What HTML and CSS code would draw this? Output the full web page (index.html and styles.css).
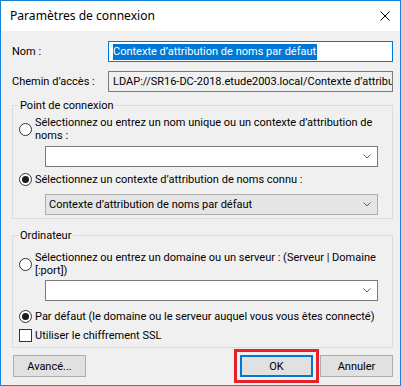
FILE: index.html
```html
<!DOCTYPE html>
<html lang="fr">
<head>
    <meta charset="UTF-8">
    <meta name="viewport" content="width=device-width, initial-scale=1.0">
    <title>Paramètres de connexion</title>
    <link rel="stylesheet" href="styles.css">
</head>
<body>
    <div class="window">
        <div class="titlebar">
            <span class="title">Paramètres de connexion</span>
            <svg class="close" width="10" height="10" viewBox="0 0 10 10">
                <path d="M0.5 0.5L9.5 9.5M9.5 0.5L0.5 9.5" stroke="#000" stroke-width="1" fill="none"/>
            </svg>
        </div>

        <div class="content">
            <div class="field-row">
                <label class="field-label">Nom :</label>
                <div class="textbox focused"><span class="selection">Contexte d’attribution de noms par défaut</span></div>
            </div>
            <div class="field-row row-path">
                <label class="field-label">Chemin d’accès :</label>
                <div class="textbox readonly">LDAP://SR16-DC-2018.etude2003.local/Contexte d’attribution de noms par défaut</div>
            </div>

            <fieldset class="group group-point">
                <legend>Point de connexion</legend>
                <div class="option opt-unique">
                    <span class="radio"></span>
                    <span class="option-text">Sélectionnez ou entrez un nom unique ou un contexte d’attribution de<br>noms :</span>
                </div>
                <div class="combo combo-unique">
                    <span class="combo-value"></span>
                    <svg class="chevron" width="8" height="5" viewBox="0 0 8 5"><path d="M0.5 0.5L4 4L7.5 0.5" stroke="#606060" fill="none"/></svg>
                </div>
                <div class="option opt-known">
                    <span class="radio checked"></span>
                    <span class="option-text">Sélectionnez un contexte d’attribution de noms connu :</span>
                </div>
                <div class="combo list combo-known">
                    <span class="combo-value">Contexte d’attribution de noms par défaut</span>
                    <svg class="chevron" width="8" height="5" viewBox="0 0 8 5"><path d="M0.5 0.5L4 4L7.5 0.5" stroke="#606060" fill="none"/></svg>
                </div>
            </fieldset>

            <fieldset class="group group-computer">
                <legend>Ordinateur</legend>
                <div class="option opt-server">
                    <span class="radio"></span>
                    <span class="option-text">Sélectionnez ou entrez un domaine ou un serveur : (Serveur | Domaine<br>[:port])</span>
                </div>
                <div class="combo combo-server">
                    <span class="combo-value"></span>
                    <svg class="chevron" width="8" height="5" viewBox="0 0 8 5"><path d="M0.5 0.5L4 4L7.5 0.5" stroke="#606060" fill="none"/></svg>
                </div>
                <div class="option opt-default">
                    <span class="radio checked"></span>
                    <span class="option-text">Par défaut (le domaine ou le serveur auquel vous vous êtes connecté)</span>
                </div>
                <div class="option opt-ssl">
                    <span class="checkbox"></span>
                    <span class="option-text">Utiliser le chiffrement SSL</span>
                </div>
            </fieldset>

            <div class="buttons">
                <button class="btn btn-advanced">Avancé...</button>
                <div class="buttons-right">
                    <button class="btn btn-default highlight">OK</button>
                    <button class="btn">Annuler</button>
                </div>
            </div>
        </div>
    </div>
</body>
</html>
```

FILE: styles.css
```css
* {
    box-sizing: border-box;
    margin: 0;
    padding: 0;
}
body {
    font-family: Roboto, "Noto Sans", sans-serif;
    font-size: 11px;
    line-height: 13px;
    color: #000;
    background: #fff;
}
.window {
    width: 401px;
    height: 386px;
    border: 1px solid #1883d7;
    background: #f0f0f0;
    display: flex;
    flex-direction: column;
}
.titlebar {
    height: 30px;
    flex: none;
    background: #fff;
    display: flex;
    align-items: center;
    justify-content: space-between;
    padding: 0 10px 0 9px;
}
.title {
    font-family: "Noto Sans", sans-serif;
    font-size: 12.1px;
    line-height: 16px;
}
.content {
    padding: 10px 7px 0 11px;
}

/* ligne label + champ */
.field-row {
    display: flex;
    align-items: center;
}
.row-path {
    margin-top: 9px;
}
.field-label {
    width: 96px;
    flex: none;
}
.textbox {
    width: 285px;
    height: 21px;
    border: 1px solid #7a7a7a;
    background: #fff;
    padding: 0 0 0 4px;
    display: flex;
    align-items: center;
    white-space: nowrap;
    overflow: hidden;
}
.textbox.focused {
    border-color: #0078d7;
}
.textbox.readonly {
    background: #f0f0f0;
}
.selection {
    background: #0078d7;
    color: #fff;
    line-height: 16px;
    padding-right: 1px;
}

/* groupes */
.group {
    border: 1px solid #dcdcdc;
    padding: 0 7px 0 6px;
    min-width: 0;
}
.group legend {
    line-height: 15px;
    padding: 0 2px;
    margin-left: -1px;
}
.group-point {
    margin-top: 6px;
    padding-top: 3px;
    padding-bottom: 3px;
}
.group-computer {
    margin-top: 9px;
    padding-top: 8px;
    padding-bottom: 5px;
}

.option {
    display: flex;
    align-items: center;
    white-space: nowrap;
}
.option-text {
    margin-left: 3px;
}
.radio {
    width: 13px;
    height: 13px;
    flex: none;
    border: 1px solid #333;
    border-radius: 50%;
    background: #fff;
    display: flex;
    align-items: center;
    justify-content: center;
}
.radio.checked::after {
    content: "";
    width: 7px;
    height: 7px;
    border-radius: 50%;
    background: #1a1a1a;
}
.checkbox {
    width: 13px;
    height: 13px;
    flex: none;
    border: 1px solid #333;
    background: #fff;
}
.opt-known {
    margin-top: 6px;
}
.opt-default {
    margin-top: 9px;
}
.opt-ssl {
    margin-top: 6px;
}

.combo {
    width: 333px;
    height: 21px;
    margin-left: 26px;
    border: 1px solid #7a7a7a;
    background: #fff;
    display: flex;
    align-items: center;
    justify-content: space-between;
    padding: 0 6px 0 3px;
}
.combo.list {
    background: #e5e5e5;
    border-color: #adadad;
}
.combo-unique {
    margin-top: 4px;
}
.combo-known {
    margin-top: 8px;
}
.combo-server {
    margin-top: 3px;
}

/* boutons */
.buttons {
    margin-top: 7px;
    display: flex;
    justify-content: space-between;
    padding-left: 1px;
}
.buttons-right {
    display: flex;
    gap: 7px;
}
.btn {
    width: 73px;
    height: 22px;
    font-family: inherit;
    font-size: 11px;
    color: #000;
    background: #e1e1e1;
    border: 1px solid #adadad;
}
.btn-default {
    border: 2px solid #0078d7;
}
.highlight {
    outline: 3px solid #e8202a;
    outline-offset: 3px;
}
```
